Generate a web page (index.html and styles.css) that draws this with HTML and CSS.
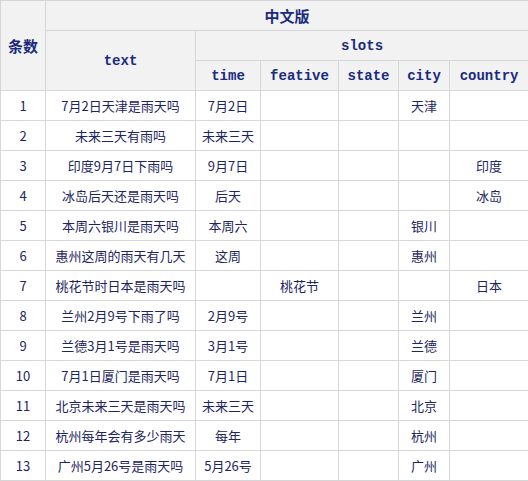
FILE: index.html
```html
<!DOCTYPE html>
<html lang="zh">
<head>
<meta charset="utf-8">
<link rel="stylesheet" href="styles.css">
</head>
<body>
<table class="grid">
  <colgroup>
    <col class="c-num"><col class="c-text"><col class="c-time"><col class="c-feat"><col class="c-state"><col class="c-city"><col class="c-country">
  </colgroup>
  <thead>
    <tr class="h1">
      <th rowspan="3" class="cjk">条数</th>
      <th colspan="6" class="cjk">中文版</th>
    </tr>
    <tr class="h2">
      <th rowspan="2" class="mono">text</th>
      <th colspan="5" class="mono">slots</th>
    </tr>
    <tr class="h3">
      <th class="mono">time</th>
      <th class="mono">feative</th>
      <th class="mono">state</th>
      <th class="mono">city</th>
      <th class="mono">country</th>
    </tr>
  </thead>
  <tbody>
    <tr><td>1</td><td>7月2日天津是雨天吗</td><td>7月2日</td><td></td><td></td><td>天津</td><td></td></tr>
    <tr><td>2</td><td>未来三天有雨吗</td><td>未来三天</td><td></td><td></td><td></td><td></td></tr>
    <tr><td>3</td><td>印度9月7日下雨吗</td><td>9月7日</td><td></td><td></td><td></td><td>印度</td></tr>
    <tr><td>4</td><td>冰岛后天还是雨天吗</td><td>后天</td><td></td><td></td><td></td><td>冰岛</td></tr>
    <tr><td>5</td><td>本周六银川是雨天吗</td><td>本周六</td><td></td><td></td><td>银川</td><td></td></tr>
    <tr><td>6</td><td>惠州这周的雨天有几天</td><td>这周</td><td></td><td></td><td>惠州</td><td></td></tr>
    <tr><td>7</td><td>桃花节时日本是雨天吗</td><td></td><td>桃花节</td><td></td><td></td><td>日本</td></tr>
    <tr><td>8</td><td>兰州2月9号下雨了吗</td><td>2月9号</td><td></td><td></td><td>兰州</td><td></td></tr>
    <tr><td>9</td><td>兰德3月1号是雨天吗</td><td>3月1号</td><td></td><td></td><td>兰德</td><td></td></tr>
    <tr><td>10</td><td>7月1日厦门是雨天吗</td><td>7月1日</td><td></td><td></td><td>厦门</td><td></td></tr>
    <tr><td>11</td><td>北京未来三天是雨天吗</td><td>未来三天</td><td></td><td></td><td>北京</td><td></td></tr>
    <tr><td>12</td><td>杭州每年会有多少雨天</td><td>每年</td><td></td><td></td><td>杭州</td><td></td></tr>
    <tr><td>13</td><td>广州5月26号是雨天吗</td><td>5月26号</td><td></td><td></td><td>广州</td><td></td></tr>
  </tbody>
</table>
</body>
</html>
```
FILE: styles.css
```css
html, body {
  margin: 0;
  padding: 0;
  background: #ffffff;
}

.grid {
  border-collapse: collapse;
  table-layout: fixed;
  width: 528px;
  font-family: "Noto Sans CJK SC", "Liberation Sans", sans-serif;
  font-size: 13px;
  color: #1d2660;
}

.c-num { width: 45px; }
.c-text { width: 150px; }
.c-time { width: 65px; }
.c-feat { width: 78px; }
.c-state { width: 60px; }
.c-city { width: 51px; }
.c-country { width: 79px; }

.grid th,
.grid td {
  border: 1px solid #d6d6d6;
  padding: 0;
  text-align: center;
  vertical-align: middle;
  white-space: nowrap;
  overflow: hidden;
}

.grid th {
  background: #f2f2f2;
  color: #1a2a7c;
  font-weight: bold;
}

.grid tr.h1,
.grid tr.h2,
.grid tr.h3 {
  height: 30px;
}

.grid tbody tr {
  height: 30px;
}

.grid td {
  line-height: 16px;
  padding-top: 1px;
}

.cjk {
  font-family: "Noto Sans CJK SC", sans-serif;
  font-size: 15px;
  padding-top: 1px;
}

.mono {
  font-family: "Liberation Mono", "DejaVu Sans Mono", monospace;
  font-size: 14px;
  padding-top: 6px;
}
```
